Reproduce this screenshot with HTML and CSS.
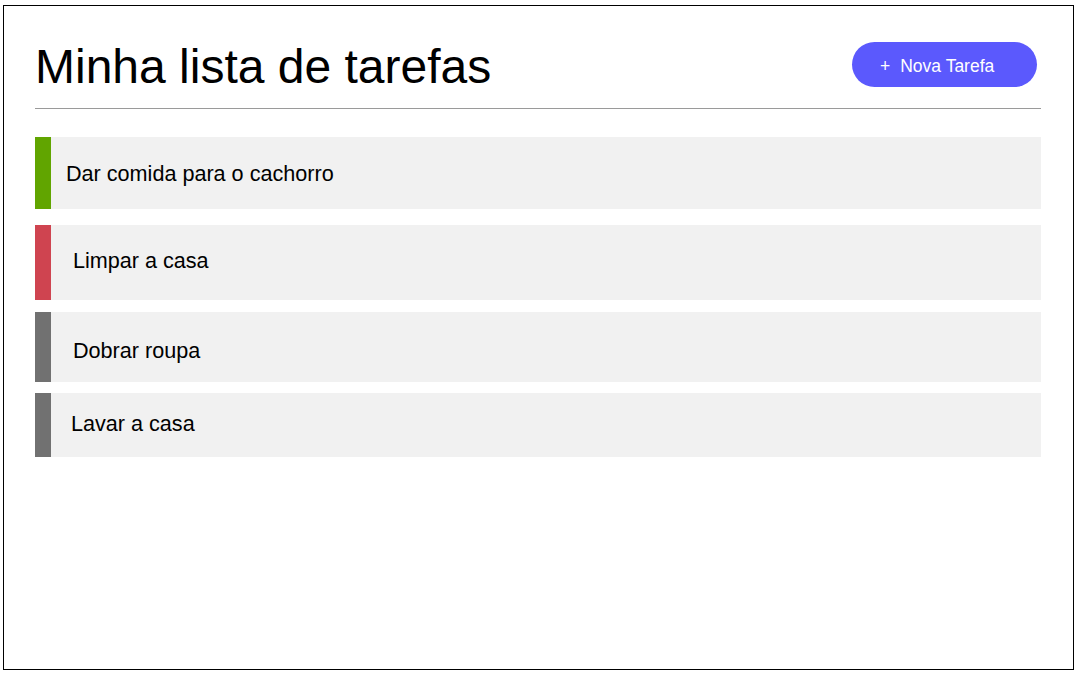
FILE: index.html
```html
<!DOCTYPE html>
<html lang="pt-BR">
<head>
<meta charset="utf-8">
<title>Minha lista de tarefas</title>
<link rel="stylesheet" href="styles.css">
</head>
<body>
<div class="frame">
  <header class="header">
    <h1 class="title">Minha lista de tarefas</h1>
    <button class="new-btn"><span class="new-btn__plus">+</span>Nova Tarefa</button>
  </header>
  <hr class="divider">
  <ul class="tasks">
    <li class="task task--green task--first">Dar comida para o cachorro</li>
    <li class="task task--red task--second">Limpar a casa</li>
    <li class="task task--grey task--third">Dobrar roupa</li>
    <li class="task task--grey task--fourth">Lavar a casa</li>
  </ul>
</div>
</body>
</html>
```

FILE: styles.css
```css
html, body {
  margin: 0;
  padding: 0;
  background: #ffffff;
}

body {
  font-family: "Liberation Sans", Arial, sans-serif;
  color: #000000;
}

.frame {
  box-sizing: border-box;
  width: 1071px;
  height: 665px;
  margin: 5px 0 0 3px;
  border: 1px solid #000000;
  padding: 34px 32px 0 31px;
}

.header {
  display: flex;
  justify-content: space-between;
  align-items: flex-start;
}

.title {
  margin: 0;
  font-size: 48px;
  font-weight: normal;
  line-height: 54px;
}

.new-btn {
  box-sizing: border-box;
  margin: 2px 4px 0 0;
  width: 185px;
  height: 45px;
  border: none;
  border-radius: 23px;
  background: #5b59fd;
  color: #ffffff;
  font-family: "Liberation Sans", Arial, sans-serif;
  font-size: 17.5px;
  padding: 3px 0 0 28px;
  text-align: left;
  display: flex;
  align-items: center;
}

.new-btn__plus {
  margin-right: 10px;
}

.divider {
  margin: 14px 0 0 0;
  border: none;
  border-top: 1px solid #9a9a9a;
  height: 0;
}

.tasks {
  list-style: none;
  margin: 28px 0 0 0;
  padding: 0;
}

.task {
  box-sizing: border-box;
  display: flex;
  align-items: center;
  background: #f1f1f1;
  border-left: 16px solid #707070;
  font-size: 21.6px;
}

.task--green { border-left-color: #61a500; }
.task--red { border-left-color: #cf4450; }
.task--grey { border-left-color: #717171; }

.task--first {
  height: 72px;
  padding: 1px 0 0 15px;
  margin-bottom: 16px;
}

.task--second {
  height: 75px;
  padding: 0 0 3px 22px;
  margin-bottom: 12px;
}

.task--third {
  height: 70px;
  padding: 7px 0 0 22px;
  margin-bottom: 11px;
}

.task--fourth {
  height: 64px;
  padding: 0 0 2px 20px;
}
```
